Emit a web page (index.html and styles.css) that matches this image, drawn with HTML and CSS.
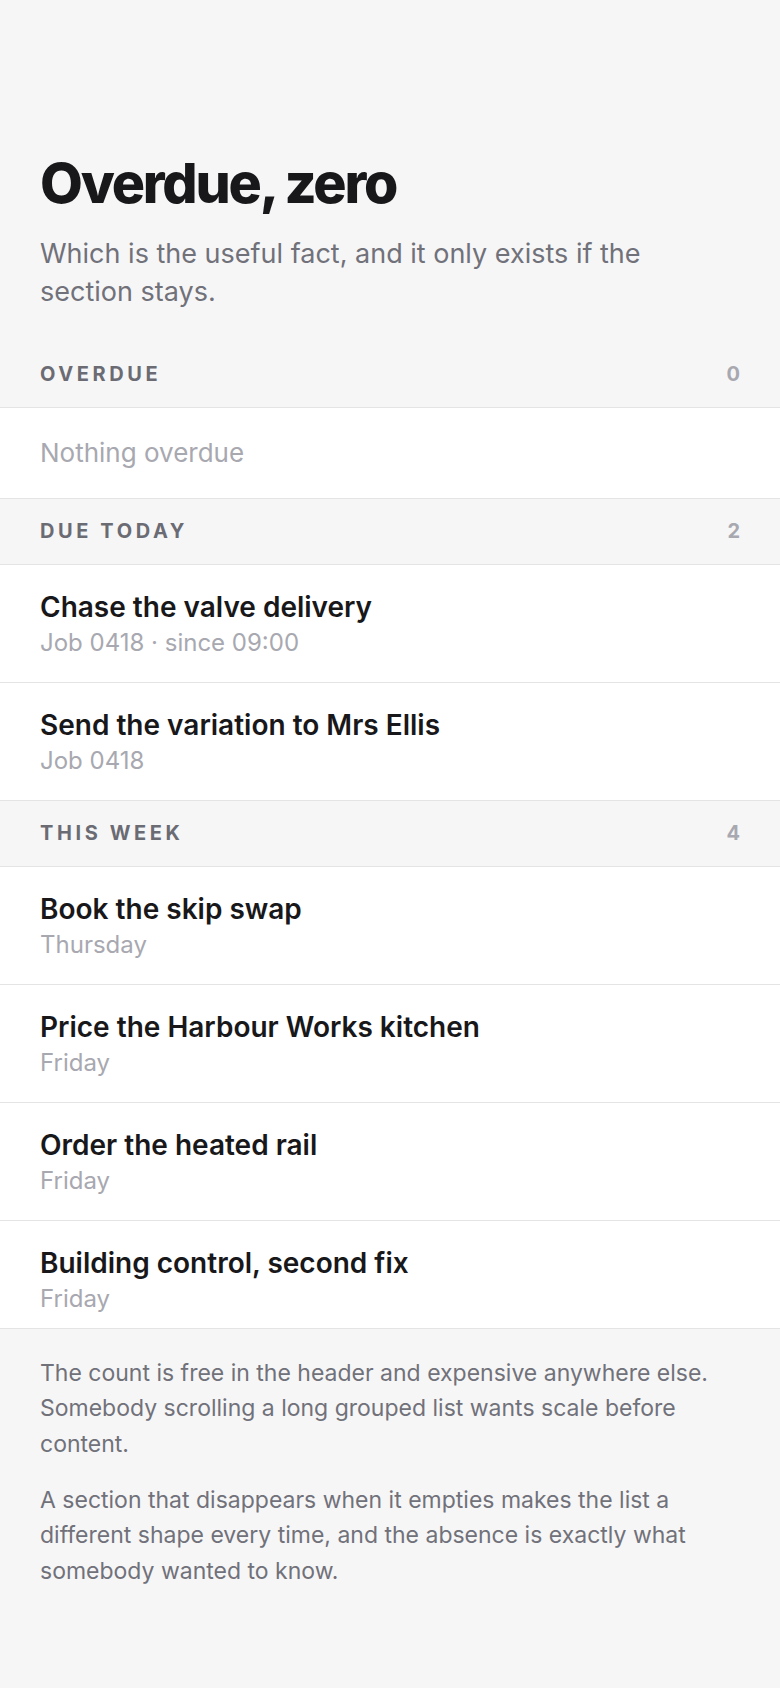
FILE: index.html
```html
<!DOCTYPE html>
<html lang="en">
<head>
<meta charset="UTF-8">
<meta name="viewport" content="width=device-width, initial-scale=1.0">
<title>Overdue, zero</title>
<link rel="stylesheet" href="styles.css">
</head>
<body>
<main class="page">
  <header class="intro">
    <h1>Overdue, zero</h1>
    <p class="lede">Which is the useful fact, and it only exists if the section stays.</p>
  </header>

  <section class="group">
    <div class="group-head">
      <span class="group-name">Overdue</span>
      <span class="group-count">0</span>
    </div>
    <div class="row row-empty">Nothing overdue</div>
  </section>

  <section class="group">
    <div class="group-head">
      <span class="group-name">Due today</span>
      <span class="group-count">2</span>
    </div>
    <div class="row">
      <div class="row-title">Chase the valve delivery</div>
      <div class="row-meta">Job 0418 · since 09:00</div>
    </div>
    <div class="row">
      <div class="row-title">Send the variation to Mrs Ellis</div>
      <div class="row-meta">Job 0418</div>
    </div>
  </section>

  <section class="group">
    <div class="group-head">
      <span class="group-name">This week</span>
      <span class="group-count">4</span>
    </div>
    <div class="row">
      <div class="row-title">Book the skip swap</div>
      <div class="row-meta">Thursday</div>
    </div>
    <div class="row">
      <div class="row-title">Price the Harbour Works kitchen</div>
      <div class="row-meta">Friday</div>
    </div>
    <div class="row">
      <div class="row-title">Order the heated rail</div>
      <div class="row-meta">Friday</div>
    </div>
    <div class="row">
      <div class="row-title">Building control, second fix</div>
      <div class="row-meta">Friday</div>
    </div>
  </section>

  <footer class="notes">
    <p>The count is free in the header and expensive anywhere else. Somebody scrolling a long grouped list wants scale before content.</p>
    <p>A section that disappears when it empties makes the list a different shape every time, and the absence is exactly what somebody wanted to know.</p>
  </footer>
</main>
</body>
</html>
```

FILE: styles.css
```css
body {
  margin: 0;
  padding: 0;
  background-color: #f6f6f7;
  font-family: Inter, "Noto Sans", sans-serif;
  color: #18181b;
}
.page {
  padding-top: 152px;
  padding-bottom: 60px;
}
.intro {
  padding: 0 40px;
}
h1 {
  margin: 0;
  font-size: 55.5px;
  line-height: 1.1;
  font-weight: 800;
  letter-spacing: -0.04em;
}
.lede {
  margin: 22px 0 0;
  max-width: 660px;
  font-size: 27px;
  line-height: 38.4px;
  color: #71717a;
}
.group-head {
  display: flex;
  justify-content: space-between;
  align-items: center;
  padding: 20px 40px 21px;
  border-bottom: 1px solid #e4e4e7;
}
.group:first-of-type .group-head {
  margin-top: 29px;
  padding-top: 21px;
}
.group-name {
  font-size: 20px;
  line-height: 24px;
  font-weight: 700;
  letter-spacing: 0.18em;
  text-transform: uppercase;
  color: #6b6b74;
}
.group-count {
  font-size: 20px;
  line-height: 24px;
  font-weight: 700;
  color: #a8a8b0;
}
.row {
  background-color: #fff;
  padding: 24px 40px 22px;
  border-bottom: 1px solid #e4e4e7;
}
.group:last-of-type .row:last-child {
  padding-bottom: 12px;
}
.row-empty {
  padding-top: 26px;
  padding-bottom: 26px;
  font-size: 26px;
  line-height: 38px;
  color: #a8a8b0;
}
.row-title {
  font-size: 28px;
  line-height: 36px;
  font-weight: 600;
}
.row-meta {
  margin-top: 1px;
  font-size: 24px;
  line-height: 34px;
  color: #a8a8b0;
}
.notes {
  padding: 27px 40px 0;
}
.notes p {
  margin: 0 0 20.5px;
  font-size: 23px;
  line-height: 35.5px;
  color: #71717a;
}
```
